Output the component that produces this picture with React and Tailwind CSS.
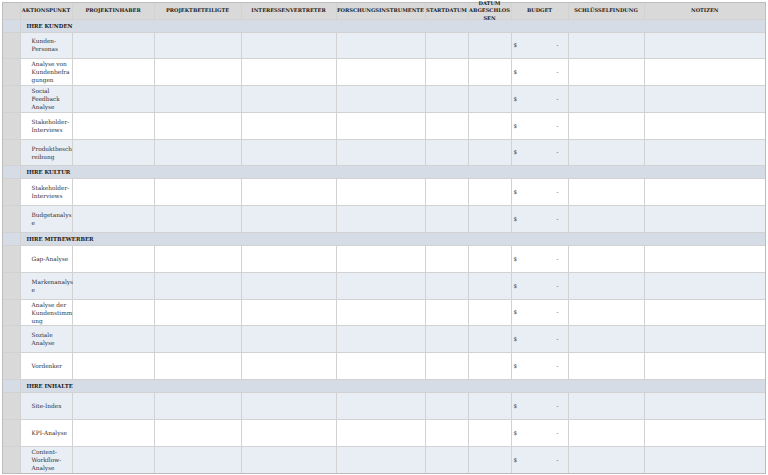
import React from 'react'

const columns = [
  { key: 'gutter', label: [''], w: 17 },
  { key: 'akt', label: ['AKTIONSPUNKT'], w: 52 },
  { key: 'inh', label: ['PROJEKTINHABER'], w: 82 },
  { key: 'bet', label: ['PROJEKTBETEILIGTE'], w: 87 },
  { key: 'int', label: ['INTERESSENVERTRETER'], w: 95 },
  { key: 'for', label: ['FORSCHUNGSINSTRUMENTE'], w: 89 },
  { key: 'start', label: ['STARTDATUM'], w: 43 },
  { key: 'datum', label: ['DATUM', 'ABGESCHLOS', 'SEN'], w: 43 },
  { key: 'budget', label: ['BUDGET'], w: 57 },
  { key: 'schl', label: ['SCHLÜSSELFINDUNG'], w: 76 },
  { key: 'notiz', label: ['NOTIZEN'], w: 121 },
]

// line breaks as they appear in the sheet
const rows = [
  { section: 'IHRE KUNDEN' },
  { lines: ['Kunden-', 'Personas'], tint: true },
  { lines: ['Analyse von', 'Kundenbefra', 'gungen'] },
  { lines: ['Social', 'Feedback', 'Analyse'], tint: true },
  { lines: ['Stakeholder-', 'Interviews'] },
  { lines: ['Produktbesch', 'reibung'], tint: true },
  { section: 'IHRE KULTUR' },
  { lines: ['Stakeholder-', 'Interviews'] },
  { lines: ['Budgetanalys', 'e'], tint: true },
  { section: 'IHRE MITBEWERBER' },
  { lines: ['Gap-Analyse'] },
  { lines: ['Markenanalys', 'e'], tint: true },
  { lines: ['Analyse der', 'Kundenstimm', 'ung'] },
  { lines: ['Soziale', 'Analyse'], tint: true },
  { lines: ['Vordenker'] },
  { section: 'IHRE INHALTE' },
  { lines: ['Site-Index'], tint: true },
  { lines: ['KPI-Analyse'] },
  { lines: ['Content-', 'Workflow-', 'Analyse'], tint: true },
]

const cell = 'border border-[#d2d2d2] p-0 align-middle'

export default function App() {
  return (
    <div className="w-[768px] h-[475px] bg-white pt-[2px] pl-[2px] font-['DejaVu_Serif',serif] text-[#2b2b2b]">
      <div className="w-[764px] border border-[#bcbcbc]">
        <table className="table-fixed border-collapse border-hidden w-[762px]">
          <colgroup>
            {columns.map((c) => (
              <col key={c.key} style={{ width: c.w }} />
            ))}
          </colgroup>
          <thead>
            <tr>
              {columns.map((c) => (
                <th key={c.key} className={`${cell} bg-[#d9d9d9] h-[16px]`}>
                  <div className="h-[15px] flex flex-col items-center justify-center text-center text-[5.1px] leading-[7.5px] font-bold text-[#222] whitespace-nowrap">
                    {c.label.map((l, j) => (
                      <span key={j}>{l}</span>
                    ))}
                  </div>
                </th>
              ))}
            </tr>
          </thead>
          <tbody>
            {rows.map((r, i) =>
              r.section ? (
                <tr key={i} className="bg-[#d6dce5]">
                  <td className={`${cell} h-[13px]`}></td>
                  <td colSpan={10} className={`${cell} h-[13px]`}>
                    <div className="pl-[6px] text-[5.4px] font-bold text-[#222] leading-[12px]">{r.section}</div>
                  </td>
                </tr>
              ) : (
                <tr key={i} className={r.tint ? 'bg-[#e9edf4]' : 'bg-white'}>
                  <td className={`${cell} h-[26.8px] bg-[#d9d9d9]`}></td>
                  <td className={`${cell} h-[26.8px]`}>
                    <div className="pl-[11px] flex flex-col text-[5.8px] leading-[8px] text-[#333] whitespace-nowrap">
                      {r.lines.map((l, j) => (
                        <span key={j}>{l}</span>
                      ))}
                    </div>
                  </td>
                  <td className={cell}></td>
                  <td className={cell}></td>
                  <td className={cell}></td>
                  <td className={cell}></td>
                  <td className={cell}></td>
                  <td className={cell}></td>
                  <td className={cell}>
                    <div className="flex justify-between pl-[2px] pr-[9px] text-[5.6px] text-[#333]">
                      <span>$</span>
                      <span>-</span>
                    </div>
                  </td>
                  <td className={cell}></td>
                  <td className={cell}></td>
                </tr>
              )
            )}
          </tbody>
        </table>
      </div>
    </div>
  )
}
